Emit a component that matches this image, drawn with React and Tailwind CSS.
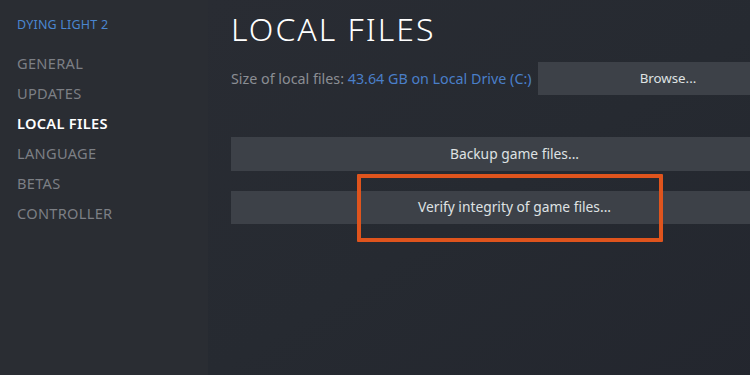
import React from "react";

const NAV = ["GENERAL", "UPDATES", "LOCAL FILES", "LANGUAGE", "BETAS", "CONTROLLER"];

export default function App() {
  return (
    <div className="flex w-[750px] h-[375px] overflow-hidden bg-[#272a31] font-['Noto_Sans',sans-serif]">
      <aside className="w-[208px] shrink-0 bg-[#2a2d33] pl-[17px] pt-[16px]">
        <p className="text-[12.5px] leading-[18px] text-[#4a86d0] tracking-[0.2px]">DYING LIGHT 2</p>
        <ul className="mt-[14px] flex flex-col">
          {NAV.map(n => (
            <li
              key={n}
              className={`h-[30px] leading-[30px] text-[14.6px] tracking-[0.3px] ${n === "LOCAL FILES" ? "text-white font-semibold" : "text-[#7c7f85]"}`}
            >
              {n}
            </li>
          ))}
        </ul>
      </aside>

      <main className="relative w-[590px] shrink-0 bg-gradient-to-br from-[#292c33] via-[#262a31] to-[#23262e] pl-[23px]">
        <h1 className="mt-[11px] text-[32px] leading-[36px] font-light text-white tracking-[2px]">LOCAL FILES</h1>

        <div className="mt-[15px] flex items-center h-[33px]">
          <p className="text-[14.3px] text-[#8b8e94] whitespace-nowrap">
            Size of local files: <span className="text-[#4a7fc9]">43.64 GB on Local Drive (C:)</span>
          </p>
          <button className="ml-auto w-[260px] h-[33px] bg-[#3d4148] text-[13.3px] text-[#dfe1e3]">Browse...</button>
        </div>

        <div className="mt-[42px] flex flex-col gap-[20px]">
          <button className="h-[34px] bg-[#3d4148] text-[13.8px] text-[#dfe1e3]">Backup game files...</button>
          <button className="h-[33px] bg-[#3d4148] text-[13.8px] text-[#dfe1e3]">Verify integrity of game files...</button>
        </div>

        <div className="absolute left-[149px] top-[174px] w-[306px] h-[68px] border-[4px] border-[#df541d] rounded-[1px]" />
      </main>
    </div>
  );
}
